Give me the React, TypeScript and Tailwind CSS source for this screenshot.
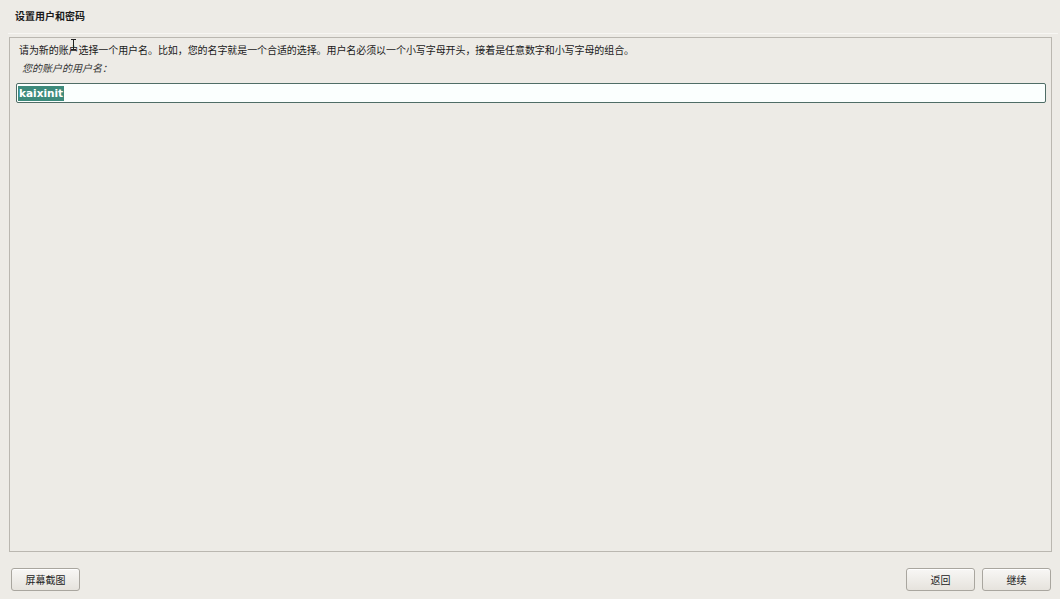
import React from "react";

const cjk = '"Noto Sans CJK SC", "DejaVu Sans", sans-serif';

function Button({ label }: { label: string }) {
  return (
    <button
      className="h-[23px] w-[69px] rounded-[3px] border border-[#a9a69f] bg-gradient-to-b from-[#f8f7f5] to-[#e6e3dd] text-[10px] text-[#222] shadow-[inset_0_1px_0_#fff]"
      style={{ fontFamily: cjk }}
    >
      {label}
    </button>
  );
}

export default function App() {
  return (
    <div
      className="relative flex h-[599px] w-[1060px] flex-col bg-[#edebe6] text-[#1a1a1a]"
      style={{ fontFamily: cjk }}
    >
      {/* 标题 */}
      <div className="h-[33px] px-[15px] pt-[9px] text-[10px] font-bold leading-[14px]">
        设置用户和密码
      </div>
      <div className="ml-[8px] mr-[2px] h-px bg-[#f7f6f3]" />

      {/* 主面板 */}
      <div className="ml-[9px] mr-[8px] mt-[3px] flex h-[515px] flex-col border border-[#bab7b0] pl-[6px] pr-[5px]">
        <div className="pl-[3px] pt-[5px] text-[10px] leading-[14px] tracking-[-0.08px]">
          请为新的账户选择一个用户名。比如，您的名字就是一个合适的选择。用户名必须以一个小写字母开头，接着是任意数字和小写字母的组合。
        </div>
        <div className="pl-[6px] pt-[4px] text-[10px] italic leading-[14px] text-[#333]">
          您的账户的用户名：
        </div>
        <div className="mt-[8px] flex h-[20px] items-center rounded-[2px] border border-[#4f6d66] bg-[#fbfffe] px-[1px]">
          <span
            className="bg-[#3d8a7b] px-[1px] text-[10.5px] font-bold leading-[15px] text-white"
            style={{ fontFamily: '"DejaVu Sans", sans-serif' }}
          >
            kaixinit
          </span>
        </div>
      </div>

      {/* 底部按钮 */}
      <div className="flex items-center pl-[11px] pr-[9px] pt-[16px]">
        <Button label="屏幕截图" />
        <div className="flex-1" />
        <div className="flex gap-[7px]">
          <Button label="返回" />
          <Button label="继续" />
        </div>
      </div>

      {/* 鼠标光标 */}
      <svg
        className="absolute left-[70px] top-[39px]"
        width="7"
        height="11"
        viewBox="0 0 7 11"
        fill="none"
        stroke="#222"
        strokeWidth="1"
      >
        <path d="M1 0.5h5M3.5 0.5v10M1 10.5h5" />
      </svg>
    </div>
  );
}
